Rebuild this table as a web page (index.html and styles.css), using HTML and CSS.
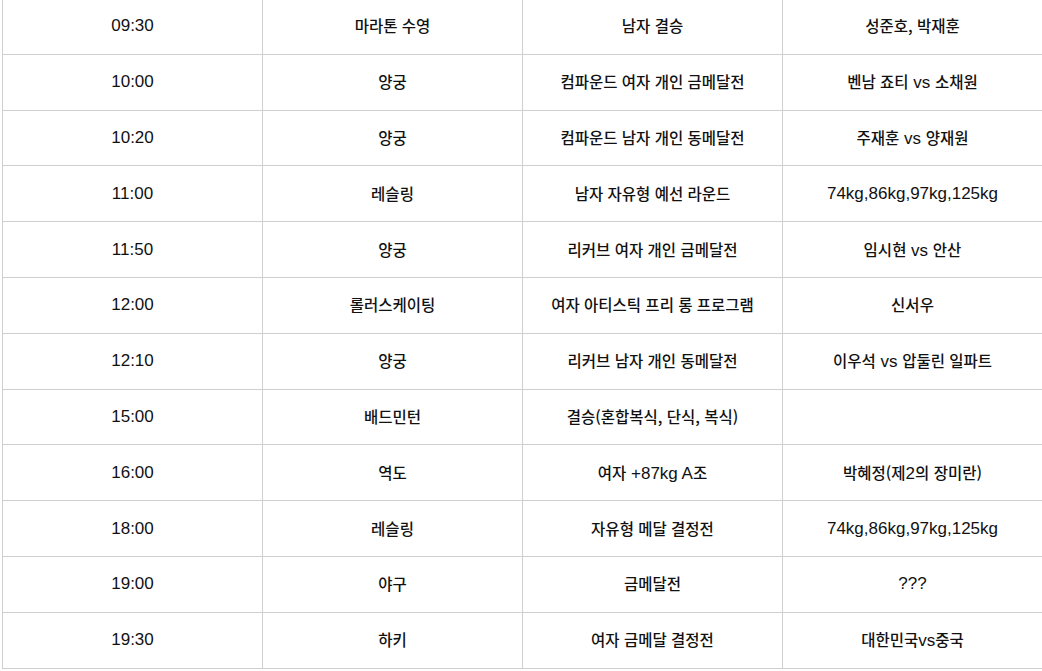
FILE: index.html
```html
<!DOCTYPE html>
<html lang="ko">
<head>
<meta charset="utf-8">
<title>일정</title>
<link rel="stylesheet" href="styles.css">
</head>
<body>
<table class="schedule">
  <colgroup><col class="c"><col class="c"><col class="c"><col class="c"></colgroup>
  <tbody>
    <tr><td>09:30</td><td><span class="ko">마라톤 수영</span></td><td><span class="ko">남자 결승</span></td><td><span class="ko">성준호, 박재훈</span></td></tr>
    <tr><td>10:00</td><td><span class="ko">양궁</span></td><td><span class="ko">컴파운드 여자 개인 금메달전</span></td><td><span class="ko">벤남 죠티</span> vs <span class="ko">소채원</span></td></tr>
    <tr><td>10:20</td><td><span class="ko">양궁</span></td><td><span class="ko">컴파운드 남자 개인 동메달전</span></td><td><span class="ko">주재훈</span> vs <span class="ko">양재원</span></td></tr>
    <tr><td>11:00</td><td><span class="ko">레슬링</span></td><td><span class="ko">남자 자유형 예선 라운드</span></td><td>74kg,86kg,97kg,125kg</td></tr>
    <tr><td>11:50</td><td><span class="ko">양궁</span></td><td><span class="ko">리커브 여자 개인 금메달전</span></td><td><span class="ko">임시현</span> vs <span class="ko">안산</span></td></tr>
    <tr><td>12:00</td><td><span class="ko">롤러스케이팅</span></td><td><span class="ko">여자 아티스틱 프리 롱 프로그램</span></td><td><span class="ko">신서우</span></td></tr>
    <tr><td>12:10</td><td><span class="ko">양궁</span></td><td><span class="ko">리커브 남자 개인 동메달전</span></td><td><span class="ko">이우석</span> vs <span class="ko">압둘린 일파트</span></td></tr>
    <tr><td>15:00</td><td><span class="ko">배드민턴</span></td><td><span class="ko">결승(혼합복식, 단식, 복식)</span></td><td></td></tr>
    <tr><td>16:00</td><td><span class="ko">역도</span></td><td><span class="ko">여자</span> +87kg A<span class="ko">조</span></td><td><span class="ko">박혜정(제</span>2<span class="ko">의 장미란)</span></td></tr>
    <tr><td>18:00</td><td><span class="ko">레슬링</span></td><td><span class="ko">자유형 메달 결정전</span></td><td>74kg,86kg,97kg,125kg</td></tr>
    <tr><td>19:00</td><td><span class="ko">야구</span></td><td><span class="ko">금메달전</span></td><td>???</td></tr>
    <tr><td>19:30</td><td><span class="ko">하키</span></td><td><span class="ko">여자 금메달 결정전</span></td><td><span class="ko">대한민국</span>vs<span class="ko">중국</span></td></tr>
  </tbody>
</table>
</body>
</html>
```
FILE: styles.css
```css
html, body {
  margin: 0;
  padding: 0;
  background: #ffffff;
  overflow: hidden;
}

.schedule {
  border-collapse: collapse;
  table-layout: fixed;
  width: 1040px;
  margin: -2px 0 0 2px;
  font-family: "Liberation Sans", "Noto Sans CJK KR", sans-serif;
  font-size: 17px;
  color: #111111;
}

.schedule .c {
  width: 260px;
}

.schedule td {
  height: 54.8px;
  padding: 0;
  border: 1px solid #cfcfcf;
  text-align: center;
  vertical-align: middle;
  white-space: nowrap;
  line-height: 20px;
}

.ko {
  font-family: "Noto Sans CJK KR", sans-serif;
  font-size: 15.5px;
  font-weight: 500;
}
```
